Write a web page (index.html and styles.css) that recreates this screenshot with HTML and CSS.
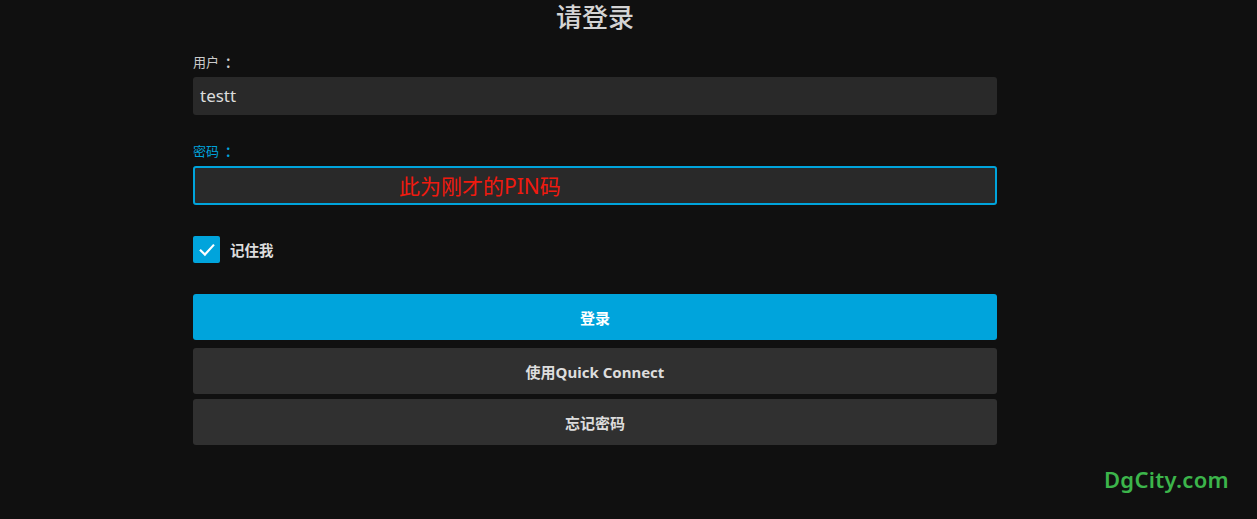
FILE: index.html
```html
<!DOCTYPE html>
<html lang="zh-CN">
<head>
<meta charset="utf-8" />
<title>请登录</title>
<link rel="stylesheet" href="styles.css">
</head>
<body>
	<div class="page">
		<form class="login">
			<h1 class="title">请登录</h1>

			<div class="field">
				<label class="label">用户<span class="colon">：</span></label>
				<div class="input">testt</div>
			</div>

			<div class="field">
				<label class="label focused">密码<span class="colon">：</span></label>
				<div class="input active">
					<span class="note">此为刚才的PIN码</span>
				</div>
			</div>

			<div class="remember">
				<span class="check">
					<svg width="20" height="20" viewBox="0 0 24 24"><path d="M4.5 12.5l5 5L19.5 6.5" fill="none" stroke="#fff" stroke-width="2.6" stroke-linecap="square"/></svg>
				</span>
				<span class="remember-text">记住我</span>
			</div>

			<div class="buttons">
				<div class="btn primary">登录</div>
				<div class="btn">使用Quick Connect</div>
				<div class="btn">忘记密码</div>
			</div>
		</form>
	</div>

	<div class="watermark">DgCity.com</div>
</body>
</html>
```

FILE: styles.css
```css
html, body { height: 100%; }

body {
	background: #101010;
	color: #ddd;
	margin: 0;
	padding: 0;
	overflow: hidden;
	font-family: "Noto Sans", "Noto Sans CJK SC", sans-serif;
}

.page {
	padding-left: 193px;
}

.login {
	width: 804px;
	display: flex;
	flex-direction: column;
}

.title {
	margin: 0;
	padding-top: 1px;
	height: 35px;
	text-align: center;
	font-size: 26px;
	line-height: 32px;
	font-weight: 500;
	color: #d4d4d4;
}

.field {
	display: flex;
	flex-direction: column;
	margin-top: 17px;
}

.field + .field {
	margin-top: 27px;
}

.label {
	font-size: 13px;
	line-height: 18px;
	height: 24px;
	color: #ccc;
}

.colon {
	margin-left: 6px;
	font-weight: 700;
}

.label.focused {
	color: #00a4dc;
}

.input {
	position: relative;
	height: 38px;
	box-sizing: border-box;
	background: #292929;
	border-radius: 3px;
	padding: 0 7px;
	font-size: 17px;
	line-height: 38px;
	color: #ddd;
}

.input.active {
	height: 39px;
	border: 2px solid #00a4dc;
	line-height: 35px;
}

.note {
	position: absolute;
	left: 204px;
	top: 0;
	color: #f01a0f;
	font-size: 21px;
	line-height: 37px;
}

.remember {
	display: flex;
	align-items: center;
	gap: 10px;
	margin-top: 31px;
}

.check {
	width: 27px;
	height: 27px;
	border-radius: 2px;
	background: #00a4dc;
	display: flex;
	align-items: center;
	justify-content: center;
}

.remember-text {
	font-size: 14.5px;
	font-weight: 600;
	color: #ddd;
}

.buttons {
	display: flex;
	flex-direction: column;
	gap: 5px;
	margin-top: 31px;
}

.btn {
	height: 46px;
	border-radius: 3px;
	background: #303030;
	color: #ddd;
	font-size: 15px;
	font-weight: 700;
	display: flex;
	align-items: center;
	justify-content: center;
}

.btn.primary {
	background: #00a4dc;
	color: #fff;
	margin-bottom: 3px;
}

.watermark {
	position: absolute;
	right: 28px;
	bottom: 25px;
	font-size: 22px;
	font-weight: 600;
	color: #3cb54b;
	letter-spacing: 0.3px;
}
```
